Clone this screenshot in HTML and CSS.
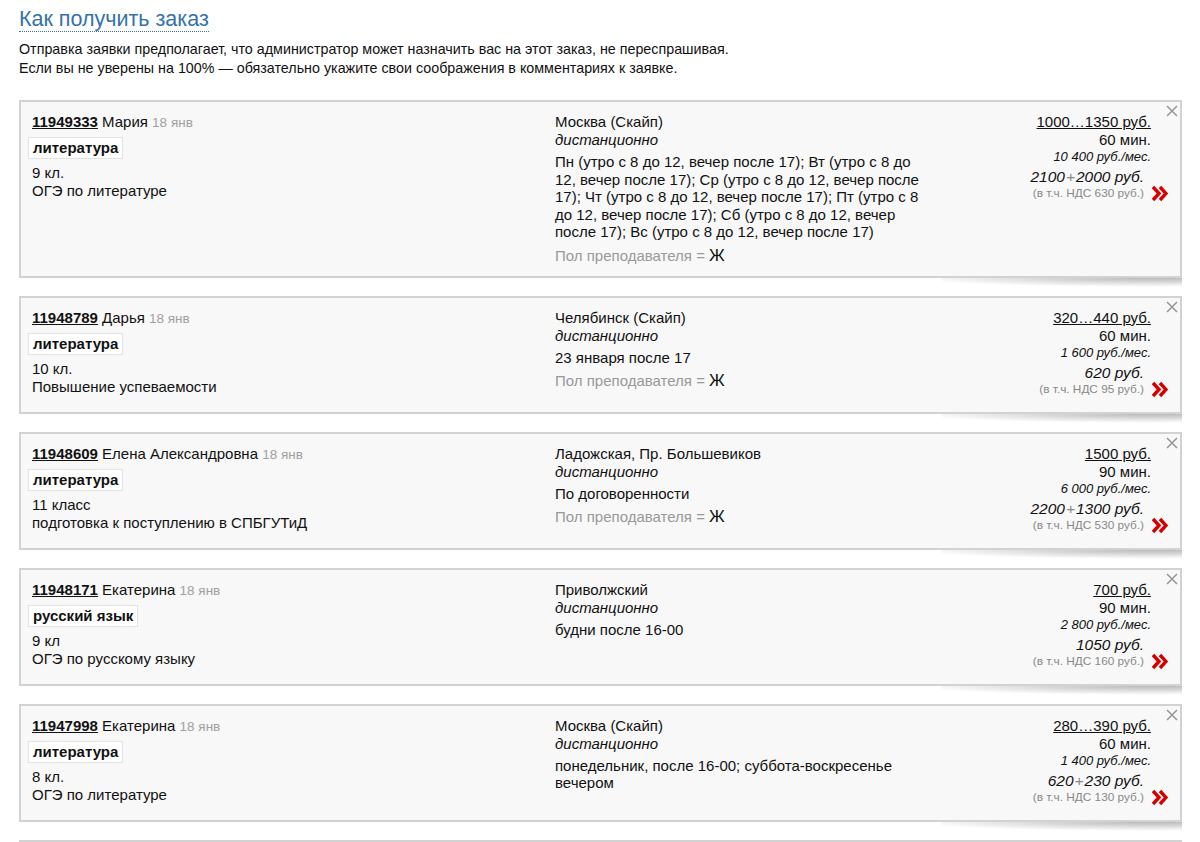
FILE: index.html
```html
<!DOCTYPE html>
<html lang="ru">
<head>
<meta charset="utf-8">
<title>Как получить заказ</title>
<link rel="stylesheet" href="styles.css">
</head>
<body>
<div class="page">
  <h1 class="title"><a href="#" class="title-link">Как получить заказ</a></h1>
  <p class="intro">Отправка заявки предполагает, что администратор может назначить вас на этот заказ, не переспрашивая.<br>Если вы не уверены на 100% — обязательно укажите свои соображения в комментариях к заявке.</p>

  <div class="cards">
    <div class="card">
      <div class="col col-left">
        <div class="head"><a href="#" class="oid">11949333</a> Мария <span class="date">18 янв</span></div>
        <div class="tag">литература</div>
        <div class="desc">9 кл.<br>ОГЭ по литературе</div>
      </div>
      <div class="col col-mid">
        <div class="city">Москва (Скайп)</div>
        <div class="mode">дистанционно</div>
        <div class="sched">Пн (утро с 8 до 12, вечер после 17); Вт (утро с 8 до 12, вечер после 17); Ср (утро с 8 до 12, вечер после 17); Чт (утро с 8 до 12, вечер после 17); Пт (утро с 8 до 12, вечер после 17); Сб (утро с 8 до 12, вечер после 17); Вс (утро с 8 до 12, вечер после 17)</div>
        <div class="gender">Пол преподавателя = <span class="g">Ж</span></div>
      </div>
      <div class="col col-right">
        <a href="#" class="price">1000…1350 руб.</a>
        <div class="dur">60 мин.</div>
        <div class="month">10 400 руб./мес.</div>
        <div class="pay">
          <div class="pay-text">
            <div class="total">2100<span class="plus">+</span>2000 руб.</div>
            <div class="nds">(в т.ч. НДС 630 руб.)</div>
          </div>
          <svg class="go" width="17" height="17" viewBox="0 0 17 17"><path d="M2 2 L8 8.5 L2 15 M9 2 L15 8.5 L9 15" fill="none" stroke="#d40000" stroke-width="3.4"/></svg>
        </div>
      </div>
      <svg class="close" width="12" height="12" viewBox="0 0 12 12"><path d="M1 1 L11 11 M11 1 L1 11" stroke="#999" stroke-width="1.6"/></svg>
    </div>

    <div class="card">
      <div class="col col-left">
        <div class="head"><a href="#" class="oid">11948789</a> Дарья <span class="date">18 янв</span></div>
        <div class="tag">литература</div>
        <div class="desc">10 кл.<br>Повышение успеваемости</div>
      </div>
      <div class="col col-mid">
        <div class="city">Челябинск (Скайп)</div>
        <div class="mode">дистанционно</div>
        <div class="sched">23 января после 17</div>
        <div class="gender">Пол преподавателя = <span class="g">Ж</span></div>
      </div>
      <div class="col col-right">
        <a href="#" class="price">320…440 руб.</a>
        <div class="dur">60 мин.</div>
        <div class="month">1 600 руб./мес.</div>
        <div class="pay">
          <div class="pay-text">
            <div class="total">620 руб.</div>
            <div class="nds">(в т.ч. НДС 95 руб.)</div>
          </div>
          <svg class="go" width="17" height="17" viewBox="0 0 17 17"><path d="M2 2 L8 8.5 L2 15 M9 2 L15 8.5 L9 15" fill="none" stroke="#d40000" stroke-width="3.4"/></svg>
        </div>
      </div>
      <svg class="close" width="12" height="12" viewBox="0 0 12 12"><path d="M1 1 L11 11 M11 1 L1 11" stroke="#999" stroke-width="1.6"/></svg>
    </div>

    <div class="card">
      <div class="col col-left">
        <div class="head"><a href="#" class="oid">11948609</a> Елена Александровна <span class="date">18 янв</span></div>
        <div class="tag">литература</div>
        <div class="desc">11 класс<br>подготовка к поступлению в СПБГУТиД</div>
      </div>
      <div class="col col-mid">
        <div class="city">Ладожская, Пр. Большевиков</div>
        <div class="mode">дистанционно</div>
        <div class="sched">По договоренности</div>
        <div class="gender">Пол преподавателя = <span class="g">Ж</span></div>
      </div>
      <div class="col col-right">
        <a href="#" class="price">1500 руб.</a>
        <div class="dur">90 мин.</div>
        <div class="month">6 000 руб./мес.</div>
        <div class="pay">
          <div class="pay-text">
            <div class="total">2200<span class="plus">+</span>1300 руб.</div>
            <div class="nds">(в т.ч. НДС 530 руб.)</div>
          </div>
          <svg class="go" width="17" height="17" viewBox="0 0 17 17"><path d="M2 2 L8 8.5 L2 15 M9 2 L15 8.5 L9 15" fill="none" stroke="#d40000" stroke-width="3.4"/></svg>
        </div>
      </div>
      <svg class="close" width="12" height="12" viewBox="0 0 12 12"><path d="M1 1 L11 11 M11 1 L1 11" stroke="#999" stroke-width="1.6"/></svg>
    </div>

    <div class="card">
      <div class="col col-left">
        <div class="head"><a href="#" class="oid">11948171</a> Екатерина <span class="date">18 янв</span></div>
        <div class="tag">русский язык</div>
        <div class="desc">9 кл<br>ОГЭ по русскому языку</div>
      </div>
      <div class="col col-mid">
        <div class="city">Приволжский</div>
        <div class="mode">дистанционно</div>
        <div class="sched">будни после 16-00</div>
      </div>
      <div class="col col-right">
        <a href="#" class="price">700 руб.</a>
        <div class="dur">90 мин.</div>
        <div class="month">2 800 руб./мес.</div>
        <div class="pay">
          <div class="pay-text">
            <div class="total">1050 руб.</div>
            <div class="nds">(в т.ч. НДС 160 руб.)</div>
          </div>
          <svg class="go" width="17" height="17" viewBox="0 0 17 17"><path d="M2 2 L8 8.5 L2 15 M9 2 L15 8.5 L9 15" fill="none" stroke="#d40000" stroke-width="3.4"/></svg>
        </div>
      </div>
      <svg class="close" width="12" height="12" viewBox="0 0 12 12"><path d="M1 1 L11 11 M11 1 L1 11" stroke="#999" stroke-width="1.6"/></svg>
    </div>

    <div class="card">
      <div class="col col-left">
        <div class="head"><a href="#" class="oid">11947998</a> Екатерина <span class="date">18 янв</span></div>
        <div class="tag">литература</div>
        <div class="desc">8 кл.<br>ОГЭ по литературе</div>
      </div>
      <div class="col col-mid">
        <div class="city">Москва (Скайп)</div>
        <div class="mode">дистанционно</div>
        <div class="sched">понедельник, после 16-00; суббота-воскресенье вечером</div>
      </div>
      <div class="col col-right">
        <a href="#" class="price">280…390 руб.</a>
        <div class="dur">60 мин.</div>
        <div class="month">1 400 руб./мес.</div>
        <div class="pay">
          <div class="pay-text">
            <div class="total">620<span class="plus">+</span>230 руб.</div>
            <div class="nds">(в т.ч. НДС 130 руб.)</div>
          </div>
          <svg class="go" width="17" height="17" viewBox="0 0 17 17"><path d="M2 2 L8 8.5 L2 15 M9 2 L15 8.5 L9 15" fill="none" stroke="#d40000" stroke-width="3.4"/></svg>
        </div>
      </div>
      <svg class="close" width="12" height="12" viewBox="0 0 12 12"><path d="M1 1 L11 11 M11 1 L1 11" stroke="#999" stroke-width="1.6"/></svg>
    </div>

    <div class="card card-empty"></div>
  </div>
</div>
</body>
</html>
```

FILE: styles.css
```css
html, body {
  margin: 0;
  padding: 0;
  background: #fff;
}
body {
  font-family: "Liberation Sans", Arial, Helvetica, sans-serif;
  font-size: 15px;
  line-height: 18px;
  color: #111;
}
.page {
  padding: 7px 18px 0 19px;
}
.title {
  margin: 0;
  font-size: 21.5px;
  line-height: 24px;
  font-weight: normal;
}
.title-link {
  color: #3572ab;
  text-decoration: none;
  border-bottom: 1px dotted #3572ab;
}
.intro {
  margin: 9px 0 0;
  line-height: 19px;
  font-size: 14.3px;
}
.cards {
  margin-top: 22px;
  display: flex;
  flex-direction: column;
  gap: 18px;
}
.card {
  position: relative;
  background: #f8f8f8;
  border: 2px solid #d2d2d2;
  padding: 11px 29px 11px 11px;
  display: grid;
  grid-template-columns: 509px 375px 1fr;
  column-gap: 14px;
  min-height: 71px;
}
.card::after {
  content: "";
  position: absolute;
  top: 100%;
  right: -2px;
  margin-top: 2px;
  width: 240px;
  height: 9px;
  background: radial-gradient(ellipse 100% 100% at 88% 0%, rgba(0, 0, 0, 0.28), rgba(0, 0, 0, 0) 100%);
}
.card-empty::after {
  display: none;
}
.col {
  display: flex;
  flex-direction: column;
  align-items: flex-start;
}
.oid {
  color: #111;
  font-weight: bold;
  text-decoration: underline;
}
.date {
  color: #a0a0a0;
  font-size: 13.5px;
}
.tag {
  margin: 5px 0 0 -4px;
  padding: 1px 4px 1px 4px;
  background: #fff;
  border: 1px solid #e2e2e2;
  font-weight: bold;
  line-height: 18px;
}
.desc {
  margin-top: 5px;
}
.mode {
  font-style: italic;
}
.sched {
  margin-top: 4px;
  line-height: 17.5px;
}
.gender {
  margin-top: 6px;
  color: #999;
  line-height: 18px;
}
.gender .g {
  color: #111;
  font-size: 17px;
  line-height: 1;
}
.col-right {
  align-items: flex-end;
  text-align: right;
  padding-bottom: 4px;
}
.price {
  color: #111;
  text-decoration: underline;
}
.month {
  font-size: 13px;
  line-height: 15px;
  font-style: italic;
}
.pay {
  display: flex;
  align-items: flex-end;
  margin-top: 4px;
  margin-right: -17px;
}
.pay-text {
  text-align: right;
}
.total {
  font-size: 15.5px;
  line-height: 18px;
  font-style: italic;
}
.plus {
  color: #888;
  padding: 0 1px;
}
.nds {
  color: #888;
  font-size: 11.8px;
  line-height: 15px;
}
.go {
  display: block;
  margin-left: 7px;
  margin-bottom: -1px;
}
.close {
  position: absolute;
  top: 3px;
  right: 2px;
}
```
